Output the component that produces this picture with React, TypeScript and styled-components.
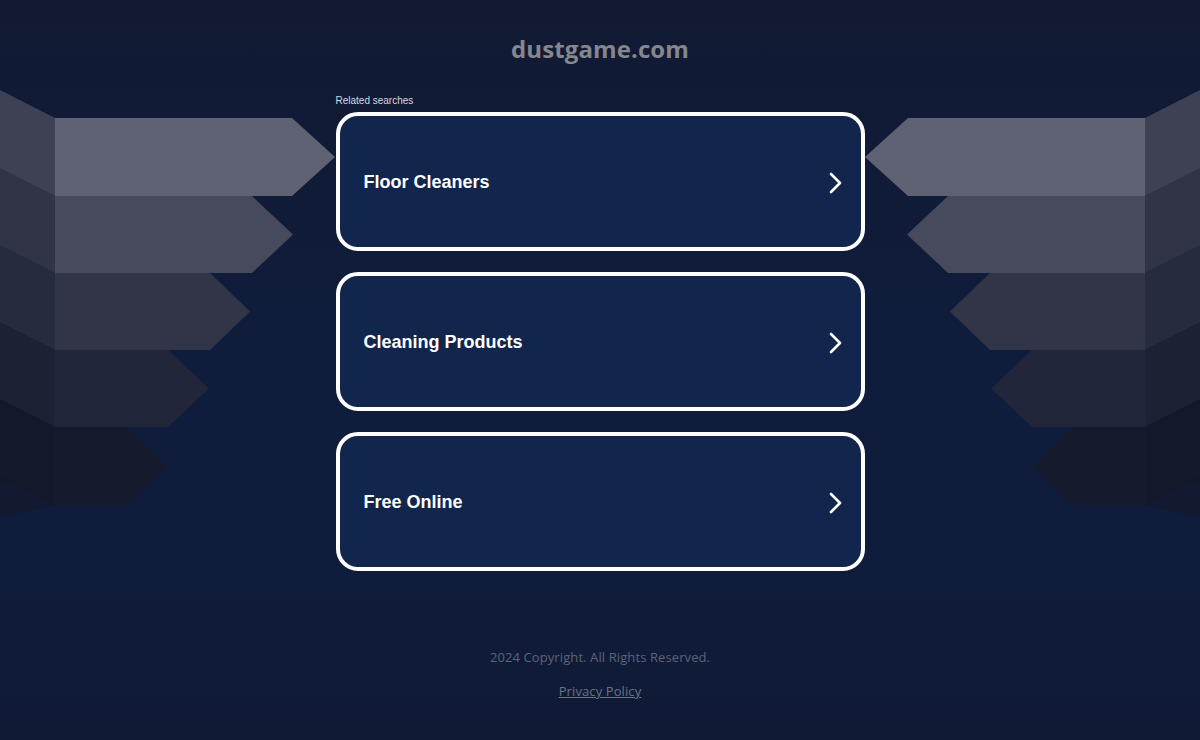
import type { FC } from 'react'
import styled, { createGlobalStyle } from 'styled-components'

const GlobalStyle = createGlobalStyle`
  html, body {
    margin: 0;
    padding: 0;
  }
  body {
    background: #101b37;
    font-family: "Liberation Sans", Arial, sans-serif;
  }
`

export const Page = styled.div`
  position: relative;
  width: 100%;
  min-height: 740px;
  overflow: hidden;
  background: linear-gradient(180deg, #121a33 0%, #0f1c3b 45%, #0f1c3b 75%, #101a35 100%);
`

export const Decor = styled.svg<{ $side: 'left' | 'right' }>`
  position: absolute;
  top: 80px;
  ${({ $side }) => ($side === 'left' ? 'left: 0;' : 'right: 0; transform: scaleX(-1);')}
  width: 340px;
  height: 460px;
  pointer-events: none;
`

export const Content = styled.div`
  position: relative;
  display: flex;
  flex-direction: column;
  align-items: center;
  padding-top: 34px;
`

export const Domain = styled.h1`
  margin: 0;
  font-family: "Open Sans", "Noto Sans", sans-serif;
  font-size: 24px;
  line-height: 30px;
  font-weight: 700;
  letter-spacing: 0.1px;
  color: #85878d;
`

export const Column = styled.div`
  display: flex;
  flex-direction: column;
  width: 529px;
  margin-top: 31px;
`

export const Label = styled.div`
  font-size: 10px;
  line-height: 12px;
  color: #d6d9e0;
  margin-bottom: 5px;
`

export const List = styled.div`
  display: flex;
  flex-direction: column;
  gap: 21px;
`

export const Card = styled.a`
  display: flex;
  align-items: center;
  justify-content: space-between;
  box-sizing: border-box;
  height: 139px;
  padding: 2px 17px 0 24px;
  border: 4px solid #ffffff;
  border-radius: 22px;
  background: #11254d;
  color: #ffffff;
  text-decoration: none;
  cursor: pointer;
`

export const CardTitle = styled.span`
  font-size: 18px;
  font-weight: 700;
`

export const Footer = styled.div`
  display: flex;
  flex-direction: column;
  align-items: center;
  margin-top: 77px;
  gap: 16px;
  font-family: "Open Sans", "Noto Sans", sans-serif;
  font-size: 13px;
  line-height: 18px;
  letter-spacing: 0.1px;
  color: #5c6478;
`

export const FooterLink = styled.a`
  color: #6a7286;
  text-decoration: underline;
`

const Chevron: FC = () => (
  <svg width="16" height="22" viewBox="0 0 16 22" fill="none">
    <path d="M3 2 L12 11 L3 20" stroke="#ffffff" strokeWidth="2.6" strokeLinecap="round" strokeLinejoin="round" />
  </svg>
)

// bars of the side decoration, top to bottom (coords in the 340x460 svg)
const bars = [
  { top: 38, bottom: 116, end: 212, tip: 255, fill: '#5f6272', face: '#3e4154' },
  { top: 116, bottom: 193, end: 172, tip: 213, fill: '#464a5c', face: '#303446' },
  { top: 193, bottom: 270, end: 130, tip: 170, fill: '#313547', face: '#272b3e' },
  { top: 270, bottom: 347, end: 88, tip: 129, fill: '#22263a', face: '#1d2134' },
  { top: 347, bottom: 425, end: 47, tip: 87, fill: '#161a2d', face: '#14182b' },
]

const SideDecor: FC<{ side: 'left' | 'right' }> = ({ side }) => (
  <Decor $side={side} viewBox="0 0 340 460">
    {bars.map((b, i) => {
      const mid = (b.top + b.bottom) / 2
      return (
        <g key={i}>
          <polygon
            points={`0,${b.top - 28} 55,${b.top} 55,${b.bottom} 0,${b.bottom - 26}`}
            fill={b.face}
          />
          <polygon
            points={`0,${mid + 10} 55,${b.bottom} 0,${b.bottom + 12}`}
            fill={b.face}
            opacity="0.6"
          />
          <polygon
            points={`55,${b.top} ${b.end + 80},${b.top} ${b.tip + 80},${mid} ${b.end + 80},${b.bottom} 55,${b.bottom}`}
            fill={b.fill}
          />
        </g>
      )
    })}
  </Decor>
)

const searches = ['Floor Cleaners', 'Cleaning Products', 'Free Online']

const App: FC = () => {
  return (
    <>
      <GlobalStyle />
      <Page>
        <SideDecor side="left" />
        <SideDecor side="right" />
        <Content>
          <Domain>dustgame.com</Domain>
          <Column>
            <Label>Related searches</Label>
            <List>
              {searches.map((s) => (
                <Card key={s}>
                  <CardTitle>{s}</CardTitle>
                  <Chevron />
                </Card>
              ))}
            </List>
          </Column>
          <Footer>
            <span>2024 Copyright. All Rights Reserved.</span>
            <FooterLink>Privacy Policy</FooterLink>
          </Footer>
        </Content>
      </Page>
    </>
  )
}

export default App
